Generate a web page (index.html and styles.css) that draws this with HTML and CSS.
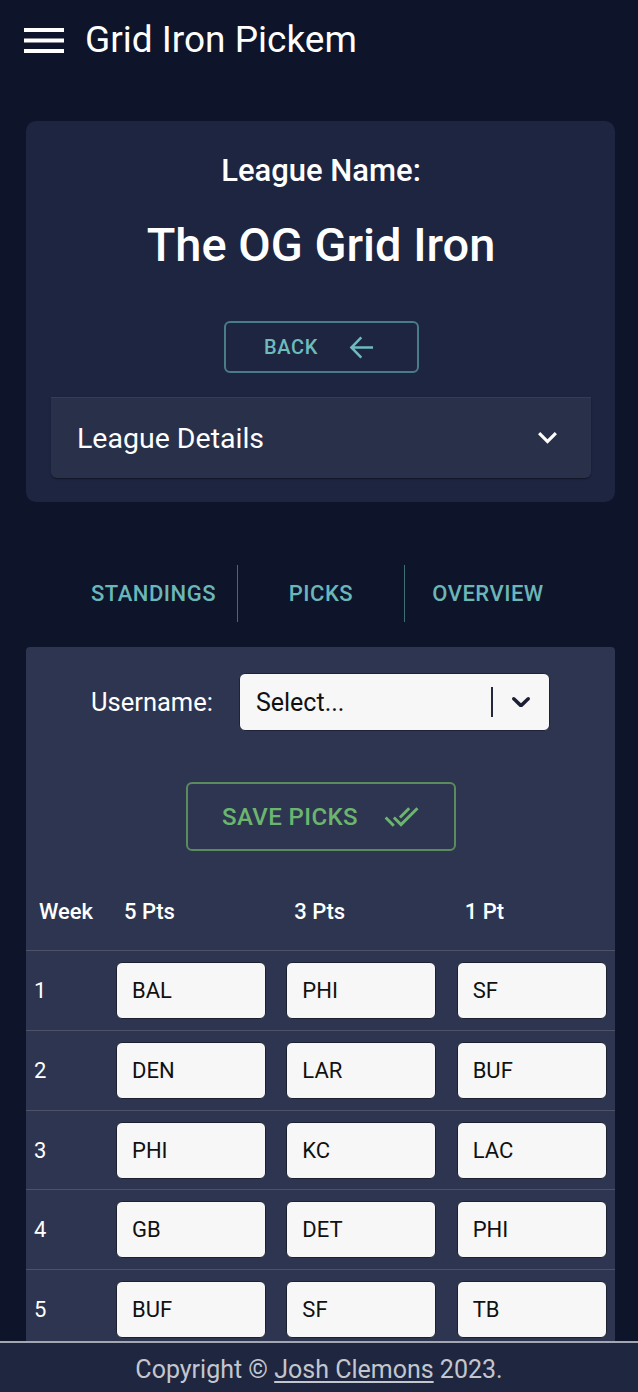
FILE: index.html
```html
<!DOCTYPE html>
<html lang="en">
<head>
<meta charset="utf-8">
<title>Grid Iron Pickem</title>
<link rel="stylesheet" href="styles.css">
</head>
<body>
<header class="topbar">
  <svg class="menu-icon" width="40" height="25" viewBox="0 0 40 25" aria-hidden="true">
    <rect x="0" y="0" width="40" height="4"/>
    <rect x="0" y="10.5" width="40" height="4"/>
    <rect x="0" y="21" width="40" height="4"/>
  </svg>
  <h1 class="app-title">Grid Iron Pickem</h1>
</header>

<main class="content">
  <section class="league-card">
    <h2 class="league-label">League Name:</h2>
    <h3 class="league-name">The OG Grid Iron</h3>
    <button class="back-btn" type="button">
      <span>BACK</span>
      <svg class="back-icon" width="25" height="25" viewBox="0 0 26 25" aria-hidden="true">
        <path d="M25 12.5H2.5M12.8 2L2.5 12.5 12.8 23" fill="none" stroke="currentColor" stroke-width="2.6"/>
      </svg>
    </button>
    <div class="accordion">
      <span class="accordion-title">League Details</span>
      <svg class="expand-icon" width="19" height="11.7" viewBox="6 8.59 12 7.41" aria-hidden="true">
        <path d="M16.59 8.59 12 13.17 7.41 8.59 6 10l6 6 6-6z"/>
      </svg>
    </div>
  </section>

  <nav class="tabs">
    <a class="tab">STANDINGS</a>
    <a class="tab">PICKS</a>
    <a class="tab">OVERVIEW</a>
  </nav>

  <section class="picks-card">
    <div class="user-row">
      <label class="user-label">Username:</label>
      <div class="select">
        <span class="select-value">Select...</span>
        <span class="select-sep"></span>
        <svg class="select-arrow" width="18" height="10.2" viewBox="4.2 7.2 11.6 6.6" aria-hidden="true">
          <path d="M4.516 7.548c0.436-0.446 1.043-0.481 1.576 0l3.908 3.747 3.908-3.747c0.533-0.481 1.141-0.446 1.574 0 0.436 0.445 0.408 1.197 0 1.615-0.406 0.418-4.695 4.502-4.695 4.502-0.217 0.223-0.502 0.335-0.787 0.335s-0.57-0.112-0.789-0.335c0 0-4.287-4.084-4.695-4.502s-0.436-1.17 0-1.615z"/>
        </svg>
      </div>
    </div>

    <div class="save-wrap">
      <button class="save-btn" type="button">
        <span>SAVE PICKS</span>
        <svg class="save-icon" width="35" height="35" viewBox="0 0 24 24" aria-hidden="true">
          <path d="M18 7l-1.41-1.41-6.34 6.34 1.41 1.41L18 7zm4.24-1.41L11.66 16.17 7.48 12l-1.41 1.41L11.66 19l12-12-1.42-1.41zM.41 13.41L6 19l1.41-1.41L1.83 12 .41 13.41z"/>
        </svg>
      </button>
    </div>

    <div class="picks-table">
      <div class="row head">
        <div class="cell week">Week</div>
        <div class="cell pick">5 Pts</div>
        <div class="cell pick">3 Pts</div>
        <div class="cell pick">1 Pt</div>
      </div>
      <div class="row">
        <div class="cell week">1</div>
        <div class="cell pick"><div class="team">BAL</div></div>
        <div class="cell pick"><div class="team">PHI</div></div>
        <div class="cell pick"><div class="team">SF</div></div>
      </div>
      <div class="row">
        <div class="cell week">2</div>
        <div class="cell pick"><div class="team">DEN</div></div>
        <div class="cell pick"><div class="team">LAR</div></div>
        <div class="cell pick"><div class="team">BUF</div></div>
      </div>
      <div class="row">
        <div class="cell week">3</div>
        <div class="cell pick"><div class="team">PHI</div></div>
        <div class="cell pick"><div class="team">KC</div></div>
        <div class="cell pick"><div class="team">LAC</div></div>
      </div>
      <div class="row">
        <div class="cell week">4</div>
        <div class="cell pick"><div class="team">GB</div></div>
        <div class="cell pick"><div class="team">DET</div></div>
        <div class="cell pick"><div class="team">PHI</div></div>
      </div>
      <div class="row">
        <div class="cell week">5</div>
        <div class="cell pick"><div class="team">BUF</div></div>
        <div class="cell pick"><div class="team">SF</div></div>
        <div class="cell pick"><div class="team">TB</div></div>
      </div>
    </div>
  </section>
</main>

<footer class="footer">
  Copyright © <a class="footer-link">Josh Clemons</a> 2023.
</footer>
</body>
</html>
```

FILE: styles.css
```css
* { box-sizing: border-box; }

html, body {
  margin: 0;
  padding: 0;
  background: #0e1429;
  color: #ffffff;
  font-family: Roboto, "Liberation Sans", sans-serif;
}

.topbar {
  display: flex;
  align-items: center;
  height: 80px;
  padding-left: 24px;
  gap: 21px;
}

.menu-icon { fill: #ffffff; display: block; }

.app-title {
  margin: 0;
  font-size: 37px;
  font-weight: 400;
  line-height: 44px;
  color: #ffffff;
}

.content {
  padding: 41px 23px 120px 26px;
}

.league-card {
  background: #1e2540;
  border-radius: 10px;
  padding: 30px 24px 24px 25px;
  text-align: center;
}

.league-label {
  margin: 0;
  font-size: 31px;
  line-height: 40px;
  font-weight: 500;
}

.league-name {
  margin: 24px 0 0;
  font-size: 47px;
  line-height: 60px;
  font-weight: 500;
}

.back-btn {
  margin-top: 46px;
  display: inline-flex;
  align-items: center;
  justify-content: center;
  gap: 31px;
  width: 195px;
  height: 52px;
  background: transparent;
  border: 2px solid #4a7c88;
  border-radius: 6px;
  color: #6ebbbd;
  font-family: inherit;
  font-size: 20px;
  font-weight: 500;
  letter-spacing: 0.6px;
  padding: 0 4px 0 0;
}

.back-icon { display: block; }

.accordion {
  margin-top: 24px;
  height: 81px;
  display: flex;
  align-items: center;
  justify-content: space-between;
  padding: 0 34px 0 26px;
  background: #293049;
  border-top: 1px solid #353c56;
  border-radius: 0 0 6px 6px;
  box-shadow: 0 2px 1px -1px rgba(0,0,0,0.2), 0 1px 1px 0 rgba(0,0,0,0.14), 0 1px 3px 0 rgba(0,0,0,0.12);
  text-align: left;
}

.accordion-title {
  font-size: 28.5px;
  font-weight: 400;
}

.expand-icon { fill: #ffffff; display: block; }

.tabs {
  margin-top: 63px;
  display: flex;
  justify-content: center;
}

.tab {
  width: 167px;
  height: 57px;
  display: flex;
  align-items: center;
  justify-content: center;
  color: #6bb6b9;
  font-size: 22px;
  font-weight: 500;
  letter-spacing: 0.5px;
}

.tab + .tab { border-left: 1px solid #3e6f79; }

.picks-card {
  margin-top: 25px;
  background: #2e3550;
  border-radius: 4px;
  padding-top: 26px;
}

.user-row {
  display: flex;
  justify-content: center;
  align-items: center;
  gap: 26px;
}

.user-label {
  font-size: 25.5px;
  color: #ffffff;
}

.select {
  width: 311px;
  height: 58px;
  display: flex;
  align-items: center;
  background: #f7f7f7;
  border: 1px solid #1d2236;
  border-radius: 6px;
  padding-left: 16px;
}

.select-value {
  flex: 1;
  color: #111111;
  font-size: 25px;
}

.select-sep {
  width: 1.5px;
  height: 30px;
  background: #23283a;
}

.select-arrow {
  display: block;
  margin: 0 19px;
  fill: #1b2034;
}

.save-wrap {
  margin-top: 51px;
  display: flex;
  justify-content: center;
}

.save-btn {
  display: inline-flex;
  align-items: center;
  justify-content: center;
  gap: 26px;
  width: 270px;
  height: 69px;
  background: transparent;
  border: 2.5px solid #5a8b5d;
  border-radius: 6px;
  color: #6cb56f;
  font-family: inherit;
  font-size: 24px;
  font-weight: 500;
  letter-spacing: 0.4px;
  padding: 0;
}

.save-icon { display: block; fill: #6cb56f; }

.picks-table { margin-top: 22px; }

.row {
  display: grid;
  grid-template-columns: 78px 1fr 1fr 1fr;
  align-items: center;
  padding: 11px 0 10.75px;
  border-bottom: 1px solid #4d5266;
  font-size: 22px;
}

.row.head {
  height: 78px;
  padding: 0;
  font-weight: 500;
}

.cell.week { padding-left: 8px; }
.row.head .cell.week { padding-left: 13px; }
.row.head .cell.pick { padding-left: 20px; }
.cell.pick { padding-left: 12px; }

.team {
  width: 150px;
  height: 57px;
  display: flex;
  align-items: center;
  padding-left: 15px;
  background: #f7f7f7;
  border: 1px solid #1c2132;
  border-radius: 6px;
  color: #111111;
  font-size: 22px;
}

.footer {
  position: fixed;
  left: 0;
  right: 0;
  bottom: 0;
  height: 51px;
  padding-top: 4px;
  background: #1f2640;
  border-top: 2px solid #a3a7b2;
  text-align: center;
  line-height: 45px;
  font-size: 25px;
  color: #c3c6cf;
}

.footer-link {
  color: #c3c6cf;
  text-decoration: underline;
  text-underline-offset: 3px;
}
```
